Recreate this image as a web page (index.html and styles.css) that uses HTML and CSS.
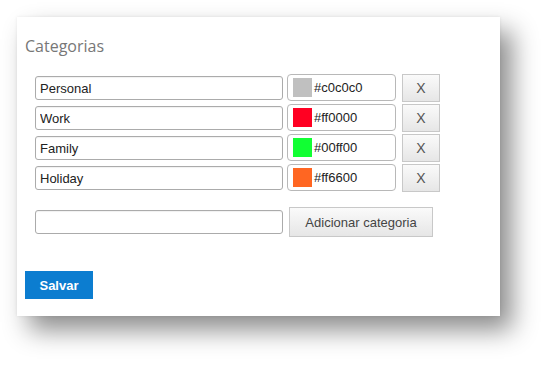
FILE: index.html
```html
<!DOCTYPE html>
<html lang="pt">
<head>
  <meta charset="UTF-8">
  <title>Categorias</title>
  <link rel="stylesheet" href="styles.css">
</head>
<body>
  <div class="panel">
    <h2 class="panel-title">Categorias</h2>

    <div class="category-list">
      <div class="category-row">
        <input class="text-input" type="text" value="Personal">
        <div class="color-input"><span class="swatch swatch-gray"></span>#c0c0c0</div>
        <button class="btn remove-button">X</button>
      </div>
      <div class="category-row">
        <input class="text-input" type="text" value="Work">
        <div class="color-input"><span class="swatch swatch-red"></span>#ff0000</div>
        <button class="btn remove-button">X</button>
      </div>
      <div class="category-row">
        <input class="text-input" type="text" value="Family">
        <div class="color-input"><span class="swatch swatch-green"></span>#00ff00</div>
        <button class="btn remove-button">X</button>
      </div>
      <div class="category-row">
        <input class="text-input" type="text" value="Holiday">
        <div class="color-input"><span class="swatch swatch-orange"></span>#ff6600</div>
        <button class="btn remove-button">X</button>
      </div>
    </div>

    <div class="add-row">
      <input class="text-input" type="text">
      <button class="btn add-button">Adicionar categoria</button>
    </div>

    <button class="save-button">Salvar</button>
  </div>
</body>
</html>
```

FILE: styles.css
```css
html {
  background: #ffffff;
}

body {
  margin: 0;
  padding: 17px 0 0 17px;
  min-height: 365px;
  box-sizing: border-box;
  background: #ffffff;
  font-family: 'Liberation Sans', Arial, sans-serif;
}

.panel {
  width: 483px;
  box-sizing: border-box;
  padding: 18px 8px 17px 8px;
  background: #ffffff;
  box-shadow: 12px 14px 24px rgba(0, 0, 0, 0.45), 0 0 3px rgba(0, 0, 0, 0.08);
}

.panel-title {
  margin: 0;
  font-family: 'Open Sans', sans-serif;
  font-size: 16px;
  font-weight: normal;
  line-height: 22px;
  color: #777777;
}

.category-list {
  margin-top: 17px;
  padding-left: 10px;
  display: flex;
  flex-direction: column;
  gap: 2px;
}

.category-row {
  display: flex;
  align-items: center;
  height: 28px;
}

.text-input {
  width: 248px;
  height: 24px;
  box-sizing: border-box;
  margin: 0;
  padding: 0 4px;
  border: 1px solid #ababab;
  border-radius: 3px;
  font-family: 'Liberation Sans', Arial, sans-serif;
  font-size: 13px;
  color: #222222;
  background: #ffffff;
  box-shadow: inset 0 1px 1px rgba(0, 0, 0, 0.06);
}

.color-input {
  width: 109px;
  height: 27px;
  box-sizing: border-box;
  margin-left: 4px;
  padding-left: 5px;
  display: flex;
  align-items: center;
  gap: 2px;
  border: 1px solid #b8b8b8;
  border-radius: 4px;
  font-size: 13px;
  color: #222222;
  position: relative;
  top: -1px;
}

.swatch {
  width: 19px;
  height: 19px;
  display: inline-block;
}

.swatch-gray { background: #c0c0c0; }
.swatch-red { background: #ff0022; }
.swatch-green { background: #11ff33; }
.swatch-orange { background: #ff6622; }

.btn {
  margin: 0;
  box-sizing: border-box;
  border: 1px solid #c8c8c8;
  border-radius: 0;
  background: linear-gradient(to bottom, #fafafa, #e6e6e6);
  font-family: 'Liberation Sans', Arial, sans-serif;
  color: #555555;
  padding: 0;
}

.remove-button {
  width: 38px;
  height: 28px;
  margin-left: 6px;
  font-size: 14px;
}

.add-row {
  margin-top: 15px;
  padding-left: 10px;
  display: flex;
  align-items: center;
  height: 30px;
}

.add-button {
  width: 144px;
  height: 30px;
  margin-left: 6px;
  font-size: 13px;
  color: #444444;
}

.save-button {
  display: block;
  margin-top: 34px;
  width: 68px;
  height: 28px;
  border: none;
  background: #0c7dd0;
  color: #ffffff;
  font-family: 'Liberation Sans', Arial, sans-serif;
  font-size: 13px;
  font-weight: bold;
  padding: 0;
}
```
